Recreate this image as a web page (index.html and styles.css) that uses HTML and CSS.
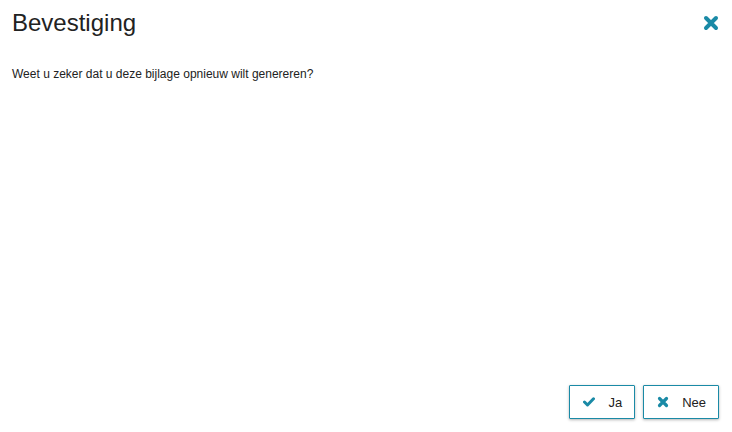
FILE: index.html
```html
<!DOCTYPE html>
<html lang="nl">
<head>
    <meta charset="UTF-8">
    <title>Bevestiging</title>
    <link rel="stylesheet" href="styles.css">
</head>
<body>

<div class="dialog">
    <div class="dialog-header">
        <h1 class="title">Bevestiging</h1>
        <button class="close" title="Sluiten">
            <svg width="16" height="16" viewBox="0 0 16 16">
                <path d="M3 3L13 13M13 3L3 13" stroke="currentColor" stroke-width="4" stroke-linecap="round"/>
            </svg>
        </button>
    </div>

    <div class="dialog-body">
        <p>Weet u zeker dat u deze bijlage opnieuw wilt genereren?</p>
    </div>

    <div class="dialog-footer">
        <button class="btn">
            <svg width="12" height="10" viewBox="0 0 12 10">
                <path d="M1.5 5L4.5 8L10.5 1.8" fill="none" stroke="currentColor" stroke-width="3" stroke-linecap="round" stroke-linejoin="round"/>
            </svg>
            <span>Ja</span>
        </button>
        <button class="btn">
            <svg width="12" height="12" viewBox="0 0 12 12">
                <path d="M2.5 2.5L9.5 9.5M9.5 2.5L2.5 9.5" stroke="currentColor" stroke-width="3.2" stroke-linecap="round"/>
            </svg>
            <span>Nee</span>
        </button>
    </div>
</div>

</body>
</html>
```

FILE: styles.css
```css
body {
    margin: 0;
    background: #fff;
    font-family: "Liberation Sans", Arial, sans-serif;
    color: #222;
}
.dialog {
    height: 432px;
    display: flex;
    flex-direction: column;
}
.dialog-header {
    display: flex;
    align-items: center;
    justify-content: space-between;
    padding: 9px 13px 0 12px;
}
.title {
    margin: 0;
    font-size: 24px;
    font-weight: 400;
    line-height: 28px;
}
.close {
    background: none;
    border: none;
    padding: 0;
    color: #1a8aa6;
    cursor: pointer;
    display: flex;
}
.dialog-body {
    flex: 1;
    padding: 0 12px;
}
.dialog-body p {
    margin: 29px 0 0;
    font-size: 12px;
    line-height: 16px;
}
.dialog-footer {
    display: flex;
    justify-content: flex-end;
    gap: 8px;
    padding: 0 13px 13px;
}
.btn {
    display: flex;
    align-items: center;
    gap: 13px;
    height: 34px;
    padding: 0 12px 0 13px;
    background: #fff;
    border: 1px solid #1a8aa6;
    border-radius: 1px;
    box-shadow: 0 1px 3px rgba(0, 0, 0, 0.3);
    font-family: inherit;
    font-size: 13px;
    color: #222;
    cursor: pointer;
}
.btn svg {
    color: #1a8aa6;
}
```
